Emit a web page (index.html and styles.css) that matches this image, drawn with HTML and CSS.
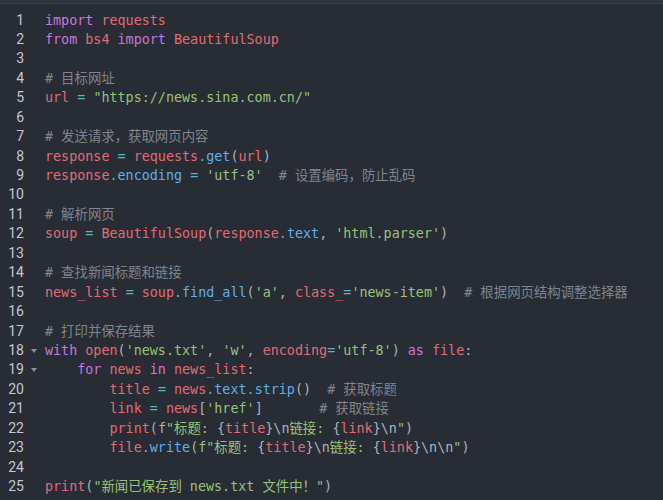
FILE: index.html
```html
<!DOCTYPE html>
<html lang="zh">
<head>
<meta charset="utf-8">
<link rel="stylesheet" href="styles.css">
</head>
<body>
<div class="editor">
  <div class="topbar"></div>
  <div class="code">
    <div class="row"><span class="ln">1</span><span class="fold"></span><span class="src"><span class="k">import</span> <span class="v">requests</span></span></div>
    <div class="row"><span class="ln">2</span><span class="fold"></span><span class="src"><span class="k">from</span> <span class="v">bs4</span> <span class="k">import</span> <span class="v">BeautifulSoup</span></span></div>
    <div class="row"><span class="ln">3</span><span class="fold"></span><span class="src"></span></div>
    <div class="row"><span class="ln">4</span><span class="fold"></span><span class="src"><span class="c"># 目标网址</span></span></div>
    <div class="row"><span class="ln">5</span><span class="fold"></span><span class="src"><span class="v">url</span> <span class="o">=</span> <span class="s">"https://news.sina.com.cn/"</span></span></div>
    <div class="row"><span class="ln">6</span><span class="fold"></span><span class="src"></span></div>
    <div class="row"><span class="ln">7</span><span class="fold"></span><span class="src"><span class="c"># 发送请求，获取网页内容</span></span></div>
    <div class="row"><span class="ln">8</span><span class="fold"></span><span class="src"><span class="v">response</span> <span class="o">=</span> <span class="v">requests</span><span class="o">.</span><span class="f">get</span><span class="p">(</span><span class="v">url</span><span class="p">)</span></span></div>
    <div class="row"><span class="ln">9</span><span class="fold"></span><span class="src"><span class="v">response</span><span class="o">.</span><span class="f">encoding</span> <span class="o">=</span> <span class="s">'utf-8'</span>  <span class="c"># 设置编码，防止乱码</span></span></div>
    <div class="row"><span class="ln">10</span><span class="fold"></span><span class="src"></span></div>
    <div class="row"><span class="ln">11</span><span class="fold"></span><span class="src"><span class="c"># 解析网页</span></span></div>
    <div class="row"><span class="ln">12</span><span class="fold"></span><span class="src"><span class="v">soup</span> <span class="o">=</span> <span class="v">BeautifulSoup</span><span class="p">(</span><span class="v">response</span><span class="o">.</span><span class="f">text</span><span class="p">,</span> <span class="s">'html.parser'</span><span class="p">)</span></span></div>
    <div class="row"><span class="ln">13</span><span class="fold"></span><span class="src"></span></div>
    <div class="row"><span class="ln">14</span><span class="fold"></span><span class="src"><span class="c"># 查找新闻标题和链接</span></span></div>
    <div class="row"><span class="ln">15</span><span class="fold"></span><span class="src"><span class="v">news_list</span> <span class="o">=</span> <span class="v">soup</span><span class="o">.</span><span class="f">find_all</span><span class="p">(</span><span class="s">'a'</span><span class="p">,</span> <span class="v">class_</span><span class="o">=</span><span class="s">'news-item'</span><span class="p">)</span>  <span class="c"># 根据网页结构调整选择器</span></span></div>
    <div class="row"><span class="ln">16</span><span class="fold"></span><span class="src"></span></div>
    <div class="row"><span class="ln">17</span><span class="fold"></span><span class="src"><span class="c"># 打印并保存结果</span></span></div>
    <div class="row"><span class="ln">18</span><span class="fold open"></span><span class="src"><span class="k">with</span> <span class="v">open</span><span class="p">(</span><span class="s">'news.txt'</span><span class="p">,</span> <span class="s">'w'</span><span class="p">,</span> <span class="v">encoding</span><span class="o">=</span><span class="s">'utf-8'</span><span class="p">)</span> <span class="k">as</span> <span class="v">file</span><span class="p">:</span></span></div>
    <div class="row"><span class="ln">19</span><span class="fold open"></span><span class="src">    <span class="k">for</span> <span class="v">news</span> <span class="k">in</span> <span class="v">news_list</span><span class="p">:</span></span></div>
    <div class="row"><span class="ln">20</span><span class="fold"></span><span class="src">        <span class="v">title</span> <span class="o">=</span> <span class="v">news</span><span class="o">.</span><span class="f">text</span><span class="o">.</span><span class="f">strip</span><span class="p">()</span>  <span class="c"># 获取标题</span></span></div>
    <div class="row"><span class="ln">21</span><span class="fold"></span><span class="src">        <span class="v">link</span> <span class="o">=</span> <span class="v">news</span><span class="p">[</span><span class="s">'href'</span><span class="p">]</span>       <span class="c"># 获取链接</span></span></div>
    <div class="row"><span class="ln">22</span><span class="fold"></span><span class="src">        <span class="v">print</span><span class="p">(</span><span class="s">f"标题: </span><span class="p">{</span><span class="v">title</span><span class="p">}</span><span class="e">\n</span><span class="s">链接: </span><span class="p">{</span><span class="v">link</span><span class="p">}</span><span class="e">\n</span><span class="s">"</span><span class="p">)</span></span></div>
    <div class="row"><span class="ln">23</span><span class="fold"></span><span class="src">        <span class="v">file</span><span class="o">.</span><span class="f">write</span><span class="p">(</span><span class="s">f"标题: </span><span class="p">{</span><span class="v">title</span><span class="p">}</span><span class="e">\n</span><span class="s">链接: </span><span class="p">{</span><span class="v">link</span><span class="p">}</span><span class="e">\n\n</span><span class="s">"</span><span class="p">)</span></span></div>
    <div class="row"><span class="ln">24</span><span class="fold"></span><span class="src"></span></div>
    <div class="row"><span class="ln">25</span><span class="fold"></span><span class="src"><span class="v">print</span><span class="p">(</span><span class="s">"新闻已保存到 news.txt 文件中！"</span><span class="p">)</span></span></div>
  </div>
</div>
</body>
</html>
```

FILE: styles.css
```css
html, body {
  margin: 0;
  padding: 0;
  background: #282c34;
}
.editor {
  width: 663px;
  height: 500px;
  background: #282c34;
  overflow: hidden;
}
.topbar {
  height: 3px;
  background: #30343e;
  border-bottom: 1px solid #3a3e48;
}
.code {
  padding-top: 6.5px;
}
.row {
  display: flex;
  height: 19.45px;
  line-height: 19.45px;
  align-items: center;
}
.ln {
  width: 24px;
  flex: none;
  text-align: right;
  font-family: Roboto, "Liberation Sans", sans-serif;
  font-size: 14px;
  color: #c4c8cf;
}
.fold {
  width: 21px;
  flex: none;
  height: 19.45px;
  position: relative;
}
.fold.open::after {
  content: "";
  position: absolute;
  left: 7px;
  top: 8px;
  border-left: 3px solid transparent;
  border-right: 3px solid transparent;
  border-top: 4px solid #8a8f99;
}
.src {
  white-space: pre;
  font-family: "DejaVu Sans Mono", "Noto Sans CJK SC", monospace;
  font-size: 13.4px;
  color: #abb2bf;
}
.k { color: #c678dd; }
.v { color: #e06c75; }
.s { color: #98c379; }
.f { color: #61afef; }
.o { color: #56b6c2; }
.p { color: #abb2bf; }
.e { color: #abb2bf; }
.c { color: #7f848e; }
```
